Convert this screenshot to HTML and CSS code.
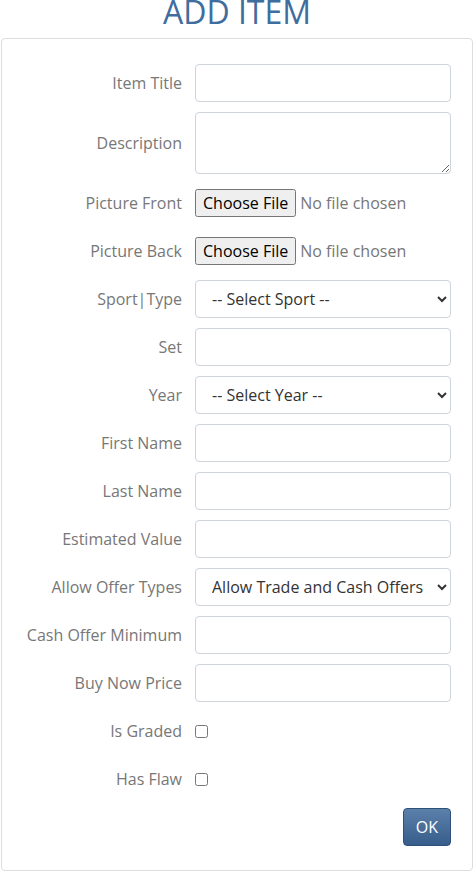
FILE: index.html
```html
<!DOCTYPE html>
<html>
<head>
<meta charset="utf-8">
<link rel="stylesheet" href="styles.css">
</head>
<body>
<h1 class="title">ADD ITEM</h1>
<div class="card">
  <form class="form">
    <label class="lbl">Item Title</label>
    <input class="ctl" type="text">
    <label class="lbl">Description</label>
    <textarea class="ctl area"></textarea>
    <label class="lbl">Picture Front</label>
    <input class="file" type="file">
    <label class="lbl">Picture Back</label>
    <input class="file" type="file">
    <label class="lbl">Sport|Type</label>
    <select class="ctl sel"><option>-- Select Sport --</option></select>
    <label class="lbl">Set</label>
    <input class="ctl" type="text">
    <label class="lbl">Year</label>
    <select class="ctl sel"><option>-- Select Year --</option></select>
    <label class="lbl">First Name</label>
    <input class="ctl" type="text">
    <label class="lbl">Last Name</label>
    <input class="ctl" type="text">
    <label class="lbl">Estimated Value</label>
    <input class="ctl" type="text">
    <label class="lbl">Allow Offer Types</label>
    <select class="ctl sel"><option>Allow Trade and Cash Offers</option></select>
    <label class="lbl">Cash Offer Minimum</label>
    <input class="ctl" type="text">
    <label class="lbl">Buy Now Price</label>
    <input class="ctl" type="text">
    <label class="lbl">Is Graded</label>
    <input class="chk" type="checkbox">
    <label class="lbl">Has Flaw</label>
    <input class="chk" type="checkbox">
    <button class="ok" type="button">OK</button>
  </form>
</div>
</body>
</html>
```
FILE: styles.css
```css
html, body {
  margin: 0;
  padding: 0;
  background: #fff;
  font-family: "Open Sans", "Liberation Sans", sans-serif;
  font-size: 16px;
}
.title {
  margin: -7px 0 7px;
  font-size: 32px;
  line-height: 38px;
  font-weight: 400;
  text-align: center;
  color: #3f6d9e;
}
.card {
  margin: 0 1px;
  border: 1px solid #ddd;
  border-radius: 4px;
  height: 833px;
  box-sizing: border-box;
}
.form {
  display: grid;
  grid-template-columns: 180px 256px;
  grid-auto-rows: minmax(38px, auto);
  column-gap: 13px;
  row-gap: 10px;
  padding: 25px 21px 24px 0;
  align-items: center;
}
.lbl {
  text-align: right;
  color: #777;
  font-size: 16px;
  line-height: 22px;
}
.ctl {
  box-sizing: border-box;
  width: 256px;
  height: 38px;
  border: 1px solid #ced4da;
  border-radius: 4px;
  background: #fff;
  font-family: inherit;
  font-size: 16px;
  color: #333;
  padding: 6px 12px;
  margin: 0;
}
.area {
  height: 62px;
  resize: vertical;
}
.sel {
  padding: 6px 8px 6px 12px;
}
.file {
  font-family: inherit;
  font-size: 16px;
  color: #777;
  margin: 0;
  width: 256px;
}
.file::file-selector-button {
  font-family: inherit;
  font-size: 16px;
  color: #000;
  margin-right: 4px;
}
.chk {
  margin: 0;
  width: 13px;
  height: 13px;
  justify-self: start;
}
.ok {
  grid-column: 2;
  justify-self: end;
  height: 38px;
  padding: 6px 12px;
  font-family: inherit;
  font-size: 16px;
  color: #fff;
  border: 1px solid #2e5079;
  border-radius: 4px;
  background: linear-gradient(#5b80aa, #375d8b);
}
```
